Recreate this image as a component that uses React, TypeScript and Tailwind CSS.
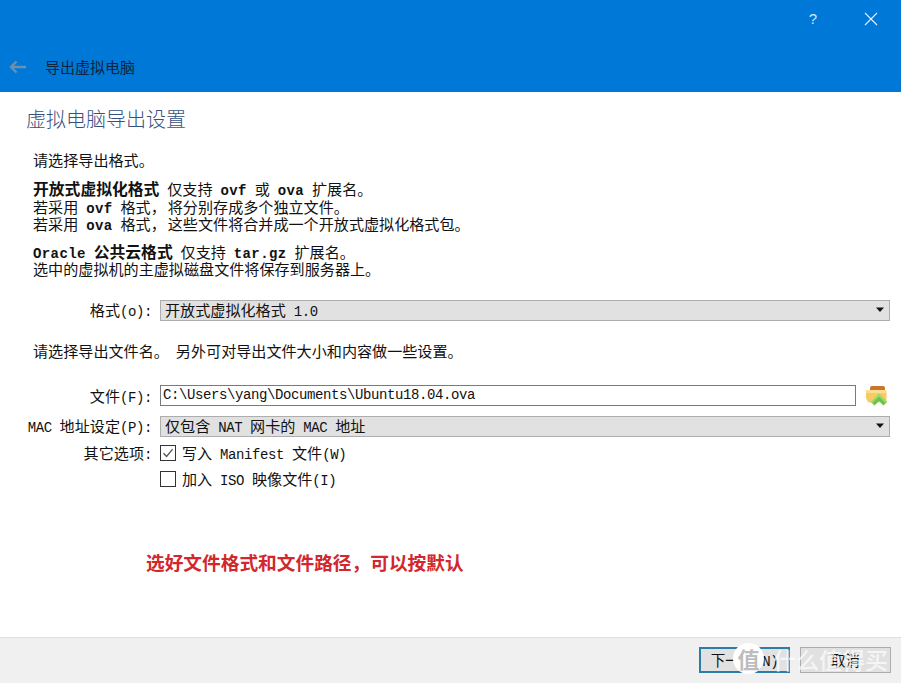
const cjk = "font-['Noto_Sans_CJK_SC','Noto_Sans',sans-serif]";

// latin runs sit in a mono face, 8px per char like the dialog font
function M({ children, bold }: { children: React.ReactNode; bold?: boolean }) {
  return (
    <span
      className={`font-['Liberation_Mono',monospace] text-[14px] ${
        bold ? "font-bold tracking-[0.4px]" : "font-normal tracking-[-0.4px]"
      }`}
    >
      {children}
    </span>
  );
}

function B({ children }: { children: React.ReactNode }) {
  return <b className="text-[15.8px]">{children}</b>;
}

function Line({ children }: { children: React.ReactNode }) {
  return <p className="h-[17.5px] whitespace-nowrap">{children}</p>;
}

function Label({ children }: { children?: React.ReactNode }) {
  return <div className="h-[18px] w-[153px] shrink-0 pr-[1px] text-right whitespace-nowrap">{children}</div>;
}

function Combo({ children }: { children: React.ReactNode }) {
  return (
    <div className="ml-[7px] flex h-[21px] w-[730px] items-center justify-between border border-[#adadad] bg-[#e1e1e1] pl-[4px] pr-[3px] whitespace-nowrap">
      <span className="h-[18px]">{children}</span>
      <svg width="10" height="6" viewBox="0 0 10 6" className="mr-[1px]">
        <path d="M1 0.5h8L5 5z" fill="#111" />
      </svg>
    </div>
  );
}

function Check({ checked, children }: { checked?: boolean; children: React.ReactNode }) {
  return (
    <div className="ml-[7px] flex h-[18px] items-center gap-[6px] whitespace-nowrap">
      <div className="flex h-[16px] w-[16px] items-center justify-center border border-[#333] bg-white">
        {checked && (
          <svg width="12" height="12" viewBox="0 0 12 12">
            <path d="M1.5 6.2 4.6 9.5 10.6 2.2" fill="none" stroke="#555" strokeWidth="1.3" />
          </svg>
        )}
      </div>
      <span className="h-[18px]">{children}</span>
    </div>
  );
}

function FolderIcon() {
  return (
    <svg width="22" height="22" viewBox="0 0 22 22" className="ml-[9px]">
      <path d="M7 1h11a2 2 0 0 1 2 2v3H5V3a2 2 0 0 1 2-2z" fill="#c9772f" />
      <path d="M1 5h19a1.5 1.5 0 0 1 1.5 1.5v9a2 2 0 0 1-2 2H5a3 3 0 0 1-2.6-1.6L1 13z" fill="#f6cb63" />
      <path d="M1 5h19a1.5 1.5 0 0 1 1.5 1.5V8H1z" fill="#fbdf8e" />
      <path d="M14 9 22 17l-3.5 3.5L14 16l-4.5 4.5L6 17z" fill="#6cc24a" />
      <path d="M14 9 22 17l-1.3 1.3L14 11.6l-6.7 6.7L6 17z" fill="#97dd72" />
    </svg>
  );
}

function Button({ children, primary }: { children: React.ReactNode; primary?: boolean }) {
  return (
    <div
      className={`flex h-[26px] w-[91px] items-center justify-center bg-[#e1e1e1] text-[14.5px] text-[#111] ${
        primary ? "border-[2px] border-[#2a7cab]" : "border border-[#adadad]"
      }`}
    >
      <span className="h-[18px]">{children}</span>
    </div>
  );
}

export default function App() {
  return (
    <div className={`${cjk} relative flex h-[683px] w-[901px] flex-col overflow-hidden bg-white text-[15.1px] leading-[17.5px] text-[#111] [word-spacing:4.5px]`}>
      <div className="flex h-[92px] shrink-0 flex-col bg-[#0078d7]">
        <div className="flex h-[38px] items-center justify-end pr-[23px] text-white">
          <span className="mr-[47px] font-['Liberation_Sans',sans-serif] text-[15px] text-[#cfe6f8]">?</span>
          <svg width="14" height="14" viewBox="0 0 14 14">
            <path d="M1 1l12 12M13 1 1 13" stroke="#e4f1fb" strokeWidth="1.1" fill="none" />
          </svg>
        </div>
        <div className="mt-[20px] flex items-center pl-[9px]">
          <svg width="18" height="14" viewBox="0 0 18 14">
            <path d="M17 7H2M7.5 1.5 2 7l5.5 5.5" fill="none" stroke="#6f90ad" strokeWidth="2.4" />
          </svg>
          <span className="ml-[18px] text-[15px] leading-[18px] text-[#0d2440]">导出虚拟电脑</span>
        </div>
      </div>

      <div className="flex flex-1 flex-col">
        <h1 className="ml-[26px] mt-[15px] h-[24px] text-[20px] leading-[24px] font-light text-[#37517e]">虚拟电脑导出设置</h1>

        <div className="ml-[33px]">
          <p className="mt-[20px] h-[18px]">请选择导出格式。</p>
          <div className="mt-[11px]">
            <Line>
              <B>开放式虚拟化格式</B> 仅支持 <M bold>ovf</M> 或 <M bold>ova</M> 扩展名。
            </Line>
            <Line>
              若采用 <M bold>ovf</M> 格式，<span className="ml-[2px]">将分别存成多个独立文件。</span>
            </Line>
            <Line>
              若采用 <M bold>ova</M> 格式，<span className="ml-[2px]">这些文件将合并成一个开放式虚拟化格式包。</span>
            </Line>
          </div>
          <div className="mt-[10px]">
            <Line>
              <M bold>Oracle</M> <B>公共云格式</B> 仅支持 <M bold>tar.gz</M> 扩展名。
            </Line>
            <Line>选中的虚拟机的主虚拟磁盘文件将保存到服务器上。</Line>
          </div>
        </div>

        <div className="mt-[22px] flex items-center">
          <Label>
            格式<M>(o):</M>
          </Label>
          <Combo>
            开放式虚拟化格式 <M>1.0</M>
          </Combo>
        </div>

        <p className="ml-[33px] mt-[21px] h-[18px]">
          请选择导出文件名。<span className="ml-[7px]">另外可对导出文件大小和内容做一些设置。</span>
        </p>

        <div className="mt-[25px] flex items-center">
          <Label>
            文件<M>(F):</M>
          </Label>
          <div className="ml-[7px] flex h-[21px] w-[696px] items-center border border-[#7a7a7a] bg-white pl-[2px]">
            <M>C:\Users\yang\Documents\Ubuntu18.04.ova</M>
          </div>
          <FolderIcon />
        </div>

        <div className="mt-[9px] flex items-center">
          <Label>
            <M>MAC</M> 地址设定<M>(P):</M>
          </Label>
          <Combo>
            仅包含 <M>NAT</M> 网卡的 <M>MAC</M> 地址
          </Combo>
        </div>

        <div className="mt-[7px] flex h-[18px] items-center">
          <Label>
            其它选项<M>:</M>
          </Label>
          <Check checked>
            写入 <M>Manifest</M> 文件<M>(W)</M>
          </Check>
        </div>

        <div className="mt-[8px] flex h-[18px] items-center">
          <Label />
          <Check>
            加入 <M>ISO</M> 映像文件<M>(I)</M>
          </Check>
        </div>

        <p className="ml-[146px] mt-[62px] h-[24px] text-[18.7px] leading-[24px] font-bold text-[#d2272c] [word-spacing:0]">选好文件格式和文件路径，可以按默认</p>

        <div className="mt-auto flex h-[46px] items-start justify-end gap-[10px] border-t border-[#dfdfdf] bg-[#f0f0f0] pr-[10px] pt-[9px]">
          <Button primary>
            下一步<M>(N)</M>
          </Button>
          <Button>取消</Button>
        </div>
      </div>

      {/* site watermark over the footer */}
      <div className="absolute left-[733px] top-[643px] flex items-center">
        <div className="flex h-[31px] w-[31px] items-center justify-center rounded-full bg-white text-[22px] font-bold text-[#bdbdbd]">
          值
        </div>
        <span className="ml-[9px] whitespace-nowrap text-[23px] leading-[30px] font-medium text-white/70">什么值得买</span>
      </div>
    </div>
  );
}
